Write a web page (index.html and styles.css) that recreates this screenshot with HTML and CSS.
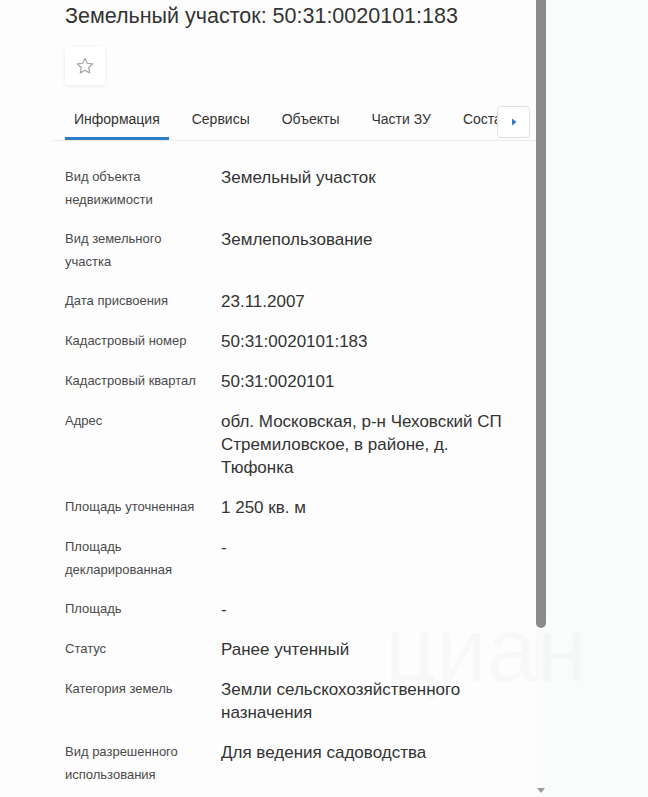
FILE: index.html
```html
<!DOCTYPE html>
<html>

<head>
  <title>Земельный участок: 50:31:0020101:183</title>
  <link rel="stylesheet" href="styles.css">
</head>

<body>
  <div class="page">
    <div class="panel">
      <h1 class="title">Земельный участок: 50:31:0020101:183</h1>

      <button class="fav-btn" type="button">
        <svg width="20" height="20" viewBox="0 0 24 24">
          <path d="M12 2.8l2.75 5.9 6.45.75-4.8 4.4 1.3 6.4L12 17.05 6.3 20.25l1.3-6.4-4.8-4.4 6.45-.75z"
            fill="none" stroke="#a3a3a3" stroke-width="1.4" stroke-linejoin="round" />
        </svg>
      </button>

      <div class="tabs-wrap">
        <div class="tabs">
          <div class="tab active">Информация</div>
          <div class="tab">Сервисы</div>
          <div class="tab">Объекты</div>
          <div class="tab">Части ЗУ</div>
          <div class="tab">Состав</div>
          <div class="tab">Границы</div>
        </div>
        <button class="tabs-next" type="button">
          <svg width="8" height="10" viewBox="0 0 8 10">
            <path d="M2 1.5L6.5 5 2 8.5z" fill="#2f7cc4" />
          </svg>
        </button>
      </div>

      <!-- info rows -->
      <div class="info">
        <div class="row">
          <div class="label">Вид объекта недвижимости</div>
          <div class="value">Земельный участок</div>
        </div>
        <div class="row">
          <div class="label">Вид земельного участка</div>
          <div class="value">Землепользование</div>
        </div>
        <div class="row">
          <div class="label">Дата присвоения</div>
          <div class="value">23.11.2007</div>
        </div>
        <div class="row">
          <div class="label">Кадастровый номер</div>
          <div class="value">50:31:0020101:183</div>
        </div>
        <div class="row">
          <div class="label">Кадастровый квартал</div>
          <div class="value">50:31:0020101</div>
        </div>
        <div class="row">
          <div class="label">Адрес</div>
          <div class="value">обл. Московская, р-н Чеховский СП Стремиловское, в районе, д. Тюфонка</div>
        </div>
        <div class="row">
          <div class="label">Площадь уточненная</div>
          <div class="value">1 250 кв. м</div>
        </div>
        <div class="row">
          <div class="label">Площадь декларированная</div>
          <div class="value">-</div>
        </div>
        <div class="row">
          <div class="label">Площадь</div>
          <div class="value">-</div>
        </div>
        <div class="row">
          <div class="label">Статус</div>
          <div class="value">Ранее учтенный</div>
        </div>
        <div class="row">
          <div class="label">Категория земель</div>
          <div class="value">Земли сельскохозяйственного назначения</div>
        </div>
        <div class="row">
          <div class="label">Вид разрешенного использования</div>
          <div class="value">Для ведения садоводства</div>
        </div>
      </div>
    </div>

    <!-- fake scrollbar of the inner panel -->
    <div class="scrollbar">
      <div class="thumb"></div>
      <div class="scroll-down"></div>
    </div>
  </div>

  <div class="watermark">циан</div>
</body>

</html>
```

FILE: styles.css
```css
* {
  box-sizing: border-box;
}

body {
  margin: 0;
  font-family: "Liberation Sans", Arial, sans-serif;
  background-color: #fafbfb;
  color: #333;
}

.page {
  display: flex;
  height: 797px;
  overflow: hidden;
}

.panel {
  width: 536px;
  height: 797px;
  overflow: hidden;
  background-color: #fdfdfd;
}

.title {
  margin: 0;
  padding: 2px 0 0 65px;
  font-size: 21.5px;
  line-height: 28px;
  font-weight: normal;
  color: #333;
}

.fav-btn {
  display: flex;
  align-items: center;
  justify-content: center;
  width: 40px;
  height: 38px;
  margin: 17px 0 0 65px;
  padding: 0;
  border: none;
  border-radius: 3px;
  background-color: #fff;
  box-shadow: 0 1px 4px rgba(0, 0, 0, 0.08);
}

.tabs-wrap {
  position: relative;
  margin: 14px 0 0 53px;
  border-bottom: 1px solid #e8eaec;
}

.tabs {
  display: flex;
  gap: 14px;
  padding-left: 12px;
  white-space: nowrap;
}

.tab {
  padding: 10px 9px 8px;
  font-size: 14px;
  line-height: 20px;
  color: #333;
  border-bottom: 3px solid transparent;
}

.tab.active {
  border-bottom-color: #2f7cc4;
}

.tabs-next {
  position: absolute;
  left: 444px;
  top: 7px;
  display: flex;
  align-items: center;
  justify-content: center;
  width: 33px;
  height: 32px;
  padding: 0;
  border: 1px solid #dde1e6;
  border-radius: 4px;
  background-color: #fff;
}

.info {
  padding: 25px 0 0 65px;
}

.row {
  display: grid;
  grid-template-columns: 140px 290px;
  column-gap: 16px;
  padding-bottom: 17px;
}

.label {
  font-size: 13px;
  line-height: 22.5px;
  color: #4a4a4a;
}

.value {
  font-size: 17px;
  line-height: 23px;
  color: #333;
}

/* faint site logo over the page */
.watermark {
  position: absolute;
  left: 385px;
  top: 600px;
  font-size: 90px;
  line-height: 100px;
  color: rgba(0, 0, 0, 0.018);
  pointer-events: none;
}

.scrollbar {
  display: flex;
  flex-direction: column;
  justify-content: space-between;
  align-items: center;
  width: 10px;
  height: 797px;
}

.thumb {
  width: 10px;
  height: 628px;
  background-color: #8b8b8b;
  border-radius: 0 0 5px 5px;
}

.scroll-down {
  width: 0;
  height: 0;
  margin-bottom: 4px;
  border-left: 4px solid transparent;
  border-right: 4px solid transparent;
  border-top: 5px solid #9a9a9a;
}
```
